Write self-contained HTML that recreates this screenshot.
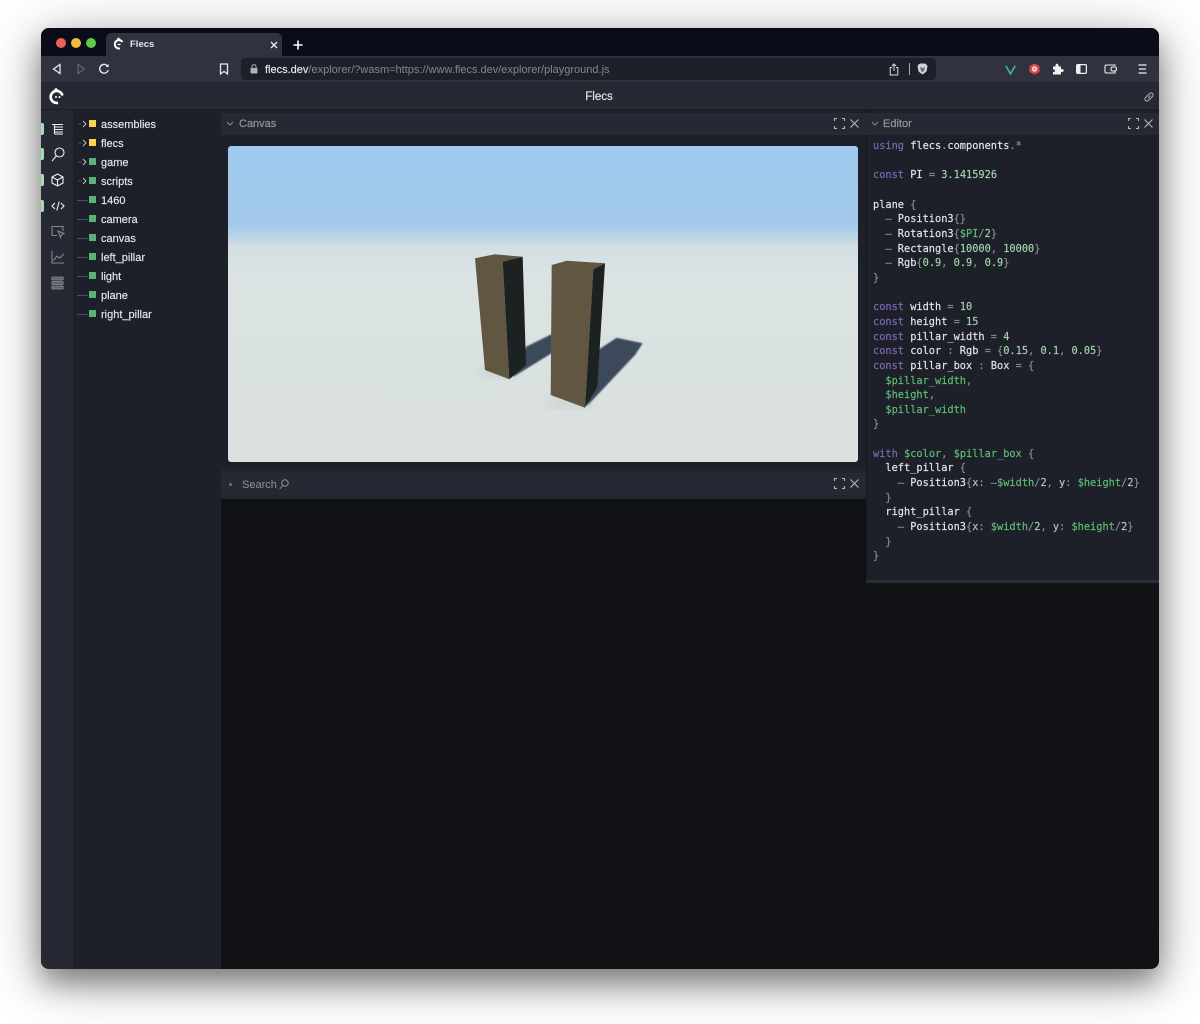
<!DOCTYPE html>
<html lang="en"><head><meta charset="utf-8"><title>Flecs</title>
<style>
*{box-sizing:border-box}
html,body{margin:0;padding:0;width:1200px;height:1024px;background:#fff;overflow:hidden}
body{font-family:"Liberation Sans",sans-serif;position:relative}
.a{position:absolute}
#win{position:absolute;left:41px;top:28px;width:1118px;height:941px;border-radius:8px;overflow:hidden;background:#111216;filter:blur(.3px)}
#shadow{position:absolute;left:41px;top:28px;width:1118px;height:941px;border-radius:8px;box-shadow:0 14px 28px rgba(0,0,0,.38),0 10px 60px rgba(0,0,0,.3)}
.t{position:absolute;white-space:pre;line-height:16px}
svg{position:absolute;overflow:visible}
.row{position:absolute;left:60px;font-size:11px;color:#e6e8ec;line-height:16px;white-space:pre;-webkit-text-stroke:.15px #e6e8ec}
.sq{position:absolute;left:48px;width:7px;height:7px}
.y{background:#f7d64a}.g{background:#5cb176}
.dash{position:absolute;left:36px;width:11px;height:1px;background:#4b4e58}
.mark{position:absolute;left:0;width:3px;height:12px;background:#a6dbb4;border-radius:0 2px 2px 0}
#code{position:absolute;left:832px;top:111px;font:10.3px/14.66px "DejaVu Sans Mono","Liberation Mono",monospace;color:#e6e8ec;white-space:pre;margin:0;-webkit-text-stroke:.15px}
.k{color:#7d6bb8}.n{color:#a4d6ad}.v{color:#5fbf78}.p{color:#8b8e96}
.h{font-size:11px;color:#8f9299;-webkit-text-stroke:.25px #8f9299}
</style></head>
<body>
<div id="shadow"></div>
<div id="win">
 <!-- tab strip -->
 <div class="a" style="left:0;top:0;width:1118px;height:28px;background:#0b0c1a"></div>
 <div class="a" style="left:15px;top:9.5px;width:10px;height:10px;border-radius:50%;background:#ee5f58"></div>
 <div class="a" style="left:30px;top:9.5px;width:10px;height:10px;border-radius:50%;background:#f5b93f"></div>
 <div class="a" style="left:45px;top:9.5px;width:10px;height:10px;border-radius:50%;background:#5fc94d"></div>
 <div class="a" style="left:65px;top:5px;width:176px;height:23px;background:#30333f;border-radius:5px 5px 0 0"></div>
 <svg style="left:72px;top:10px" width="12" height="12" viewBox="0 0 12 12" fill="none" stroke="#fff" stroke-width="2"><path d="M9.500 4A4.200 4.200 0 1 0 7 10.400"/><path d="M4.500 6.500h3" stroke-width="1.300"/><path d="M4.500 2.200 5.500 .8 7 2"/></svg>
 <div class="t" style="left:89px;top:9px;font-size:9.5px;font-weight:bold;color:#e4e6ea">Flecs</div>
 <svg style="left:229px;top:12.500px" width="8" height="8" viewBox="0 0 8 8" stroke="#eee" stroke-width="1.300"><path d="M1 1l6 6M7 1 1 7"/></svg>
 <svg style="left:252px;top:11.500px" width="10" height="10" viewBox="0 0 10 10" stroke="#fff" stroke-width="1.600"><path d="M5 .5v9M.5 5h9"/></svg>
 <!-- toolbar -->
 <div class="a" style="left:0;top:28px;width:1118px;height:26px;background:#30333f"></div>
 <svg style="left:11px;top:35px" width="10" height="12" viewBox="0 0 10 12" fill="none" stroke="#e8e8ea" stroke-width="1.300"><path d="M8 1.500v9L1.500 6z"/></svg>
 <svg style="left:35px;top:35px" width="10" height="12" viewBox="0 0 10 12" fill="none" stroke="#666a74" stroke-width="1.200"><path d="M2 1.500v9L8.500 6z"/></svg>
 <svg style="left:57px;top:35px" width="12" height="12" viewBox="0 0 12 12" fill="none" stroke="#e8e8ea" stroke-width="1.400"><path d="M10.300 7.200A4.400 4.400 0 1 1 9.200 2.600L10.400 3.800"/><path d="M10.600 1v3H7.600z" fill="#e8e8ea" stroke="none"/></svg>
 <svg style="left:178px;top:35px" width="10" height="12" viewBox="0 0 10 12" fill="none" stroke="#e8e8ea" stroke-width="1.300"><path d="M1.500 1h7v10L5 8.400 1.500 11z"/></svg>
 <div class="a" style="left:200px;top:30px;width:695px;height:22px;background:#1e2029;border-radius:4px"></div>
 <svg style="left:209px;top:36px" width="8" height="10" viewBox="0 0 8 10"><rect x=".5" y="4" width="7" height="5.500" rx="1" fill="#b0b2b8"/><path d="M2 4V2.600a2 2 0 0 1 4 0V4" fill="none" stroke="#b0b2b8" stroke-width="1"/></svg>
 <div class="t" style="left:224px;top:33.500px;font-size:11px;color:#e8e9ec;-webkit-text-stroke:.15px #e8e9ec">flecs.dev<span style="color:#85878e;-webkit-text-stroke:0">/explorer/?wasm=https://www.flecs.dev/explorer/playground.js</span></div>
 <svg style="left:848px;top:35px" width="10" height="13" viewBox="0 0 10 13" fill="none" stroke="#d8d9dc" stroke-width="1"><path d="M3 4.500H1.200v7.500h7.600V4.500H7M5 8V1M3 3 5 1l2 2"/></svg>
 <div class="a" style="left:868px;top:35px;width:1px;height:12px;background:#aaa"></div>
 <svg style="left:876px;top:35px" width="11" height="12" viewBox="0 0 11 12"><path d="M1.500 1.500 3.300.5h4.400l1.800 1 1 1.500-1 5.500L5.500 11.500 1.500 8.500.5 3z" fill="#d0d2d8"/><path d="M3 4l2.500 1L8 4 7 8 5.500 9 4 8z" fill="#6a6c76"/></svg>
 <svg style="left:964px;top:36.500px" width="11" height="10" viewBox="0 0 11 10" fill="none" stroke="#3fb587" stroke-width="1.700"><path d="M.8.800l4.700 8 4.700-8"/></svg>
 <svg style="left:988px;top:35px" width="11" height="12" viewBox="0 0 11 12"><path d="M5.500.5 10.500 3v6l-5 2.500L.5 9V3z" fill="#dd4a4a"/><circle cx="5.500" cy="6" r="2.600" fill="#f4e6e6"/><circle cx="5.500" cy="6" r="1" fill="#dd4a4a"/></svg>
 <svg style="left:1011px;top:35px" width="12" height="12" viewBox="0 0 12 12"><path d="M1 3.500h2.500C3.300 1.500 4 .8 5 .8s1.700.7 1.500 2.700H9V6c2-.2 2.700.5 2.700 1.500S11 9.200 9 9v2.500H1V9c1.500.2 2-.4 2-1.200S2.500 6.400 1 6.600z" fill="#f0f0f2"/></svg>
 <svg style="left:1035px;top:36px" width="11" height="10" viewBox="0 0 11 10"><rect x=".6" y=".6" width="9.800" height="8.800" rx="1" fill="none" stroke="#f0f0f2" stroke-width="1.200"/><rect x="1" y="1" width="3.500" height="8" fill="#f0f0f2"/></svg>
 <svg style="left:1063px;top:36px" width="13" height="10" viewBox="0 0 13 10" fill="none" stroke="#f0f0f2" stroke-width="1.100"><path d="M11 2V1H2.500C1.500 1 1 1.600 1 2.500V7.500C1 8.500 1.500 9 2.500 9H11V7.500"/><rect x="7" y="3" width="5.400" height="4" rx="1.500"/></svg>
 <svg style="left:1097px;top:36px" width="9" height="10" viewBox="0 0 9 10" stroke="#f0f0f2" stroke-width="1.300"><path d="M.5 1h8M1 5h7M.5 9h8"/></svg>
 <!-- app header -->
 <div class="a" style="left:0;top:54px;width:1118px;height:28px;background:#262933;border-bottom:1px solid #1b1d24"></div>
 <svg style="left:8px;top:59.500px" width="16" height="17" viewBox="0 0 16 17" fill="none" stroke="#fff" stroke-width="2.600"><path d="M13.500 7.500A6 6 0 1 0 9 14.800"/><path d="M5 3 7 1l2 2" stroke-width="1.800"/><circle cx="7" cy="9" r="1" fill="#fff" stroke="none"/><circle cx="10.500" cy="9" r="1" fill="#fff" stroke="none"/></svg>
 <div class="t" style="left:0;width:1116px;text-align:center;top:60.500px;font-size:11.500px;color:#e8e9ec;-webkit-text-stroke:.15px #e8e9ec">Flecs</div>
 <svg style="left:1102px;top:63px" width="12" height="12" viewBox="0 0 12 12" fill="none" stroke="#a8aab0" stroke-width="1.100"><path d="M5 7 7.500 4.500M4.500 4.700 6.500 2.600a2 2 0 0 1 3 2.900l-2 2M7.500 7.300 5.500 9.400a2 2 0 0 1-3-2.900l2-2"/></svg>
 <!-- icon rail -->
 <div class="a" style="left:0;top:82px;width:32px;height:859px;background:#262933"></div>
 <div class="a" style="left:32px;top:82px;width:148px;height:859px;background:#1d2028"></div>
 <div class="mark" style="top:95px"></div><div class="mark" style="top:120px"></div><div class="mark" style="top:146px"></div><div class="mark" style="top:172px"></div>
 <svg style="left:10px;top:95px" width="13" height="12" viewBox="0 0 13 12" fill="none" stroke="#eceef0" stroke-width="1.100"><path d="M1 1.500h11M3.500 4h8.500M3.500 6.500h8.500M3.500 9h8.500M3.500 11h8.500M3.500 1.500V11"/></svg>
 <svg style="left:10px;top:119px" width="14" height="15" viewBox="0 0 14 15" fill="none" stroke="#eceef0" stroke-width="1.100"><circle cx="8.500" cy="5.500" r="4.500"/><path d="M5.200 9 1 14"/></svg>
 <svg style="left:10px;top:145px" width="13" height="14" viewBox="0 0 13 14" fill="none" stroke="#eceef0" stroke-width="1.100"><path d="M6.500 1 12 4v6l-5.500 3L1 10V4zM1 4l5.500 3L12 4M6.500 7v6"/></svg>
 <svg style="left:10px;top:172px" width="14" height="12" viewBox="0 0 14 12" fill="none" stroke="#eceef0" stroke-width="1.100"><path d="M4 3 1 6l3 3M10 3l3 3-3 3M8.200 1.500 5.800 10.500"/></svg>
 <svg style="left:10px;top:197px" width="14" height="14" viewBox="0 0 14 14" fill="none" stroke="#83868e" stroke-width="1.100"><path d="M6 10.500H1V1.500h11V6"/><path d="M7 6l6 2.500-2.500 1-1 3z"/></svg>
 <svg style="left:10px;top:222px" width="14" height="14" viewBox="0 0 14 14" fill="none" stroke="#83868e" stroke-width="1.100"><path d="M1 1v12h12M2.500 10.500 6 6l2.500 2L13 4"/></svg>
 <svg style="left:10px;top:248px" width="13" height="14" viewBox="0 0 13 14" fill="#5f626b" stroke="#8a8d94" stroke-width=".8"><rect x=".8" y="1" width="11.400" height="3" rx=".8"/><rect x=".8" y="5.500" width="11.400" height="3" rx=".8"/><rect x=".8" y="10" width="11.400" height="3" rx=".8"/></svg>
 <!-- tree -->
 <svg style="left:36px;top:93px" width="11" height="60" viewBox="0 0 11 60" fill="none" stroke="#c8cad0" stroke-width=".9"><path d="M6 0l3 3-3 3M6 19l3 3-3 3M6 38l3 3-3 3M6 57l3 3-3 3"/><path d="M1 3H5M1 22H5M1 41H5M1 60H5" stroke="#4b4e58"/></svg>
 <div class="sq y" style="top:92px"></div><div class="row" style="top:88.500px">assemblies</div>
 <div class="sq y" style="top:111px"></div><div class="row" style="top:107.500px">flecs</div>
 <div class="sq g" style="top:130px"></div><div class="row" style="top:126.500px">game</div>
 <div class="sq g" style="top:149px"></div><div class="row" style="top:145.500px">scripts</div>
 <div class="dash" style="top:172px"></div><div class="sq g" style="top:168px"></div><div class="row" style="top:164.500px">1460</div>
 <div class="dash" style="top:191px"></div><div class="sq g" style="top:187px"></div><div class="row" style="top:183.500px">camera</div>
 <div class="dash" style="top:210px"></div><div class="sq g" style="top:206px"></div><div class="row" style="top:202.500px">canvas</div>
 <div class="dash" style="top:229px"></div><div class="sq g" style="top:225px"></div><div class="row" style="top:221.500px">left_pillar</div>
 <div class="dash" style="top:248px"></div><div class="sq g" style="top:244px"></div><div class="row" style="top:240.500px">light</div>
 <div class="dash" style="top:267px"></div><div class="sq g" style="top:263px"></div><div class="row" style="top:259.500px">plane</div>
 <div class="dash" style="top:286px"></div><div class="sq g" style="top:282px"></div><div class="row" style="top:278.500px">right_pillar</div>
 <!-- centre -->
 <div class="a" style="left:180px;top:82px;width:645px;height:859px;background:#111216"></div>
 <div class="a" style="left:180px;top:82px;width:645px;height:389px;background:#1d2028"></div>
 <div class="a" style="left:180px;top:85px;width:645px;height:22px;background:#262933"></div>
 <svg style="left:185px;top:93px" width="8" height="6" viewBox="0 0 8 6" fill="none" stroke="#85888f" stroke-width="1"><path d="M1 1l3 3 3-3"/></svg>
 <div class="t h" style="left:198px;top:88px">Canvas</div>
 <svg style="left:793px;top:90px" width="11" height="11" viewBox="0 0 11 11" fill="none" stroke="#b4b6bb" stroke-width="1.100"><path d="M.5 3V.5H3M8 .5h2.500V3M10.500 8v2.500H8M3 10.500H.5V8"/></svg>
 <svg style="left:809px;top:91px" width="9" height="9" viewBox="0 0 9 9" stroke="#b4b6bb" stroke-width="1.100"><path d="M.5.500l8 8M8.500.5l-8 8"/></svg>
 <!-- canvas -->
 <svg style="left:187px;top:118px;border-radius:3px" width="630" height="316" viewBox="228 146 630 316">
  <defs><linearGradient id="sky" x1="0" y1="0" x2="0" y2="1"><stop offset="0" stop-color="#a0c9ef"/><stop offset=".25" stop-color="#a3caec"/><stop offset=".285" stop-color="#b9d3e6"/><stop offset=".32" stop-color="#d4dfe4"/><stop offset=".4" stop-color="#dae2e3"/><stop offset="1" stop-color="#dae1de"/></linearGradient>
  <filter id="b"><feGaussianBlur stdDeviation=".9"/></filter><filter id="c"><feGaussianBlur stdDeviation="6"/></filter><filter id="d"><feGaussianBlur stdDeviation=".35"/></filter>
  <clipPath id="rr"><rect x="228" y="146" width="630" height="316" rx="3"/></clipPath></defs>
  <g clip-path="url(#rr)">
  <rect x="228" y="146" width="630" height="316" fill="url(#sky)"/>
  <ellipse cx="500" cy="372" rx="22" ry="7" fill="#aab4b5" filter="url(#c)" opacity=".3"/>
  <ellipse cx="570" cy="402" rx="24" ry="7" fill="#aab4b5" filter="url(#c)" opacity=".3"/>
  <path d="M526 346.700 552 334V353L513 377z" fill="#3b4a5a" filter="url(#b)"/>
  <path d="M598 350 616.700 337.700 642.700 343.300 635 355 587 406z" fill="#3b4a5a" filter="url(#b)"/>
  <g filter="url(#d)">
  <path d="M475 258.300 495 254.300 522.700 256.700 502.700 261.700 509.300 379.300 485 370z" fill="#615642"/>
  <path d="M502.700 261.700 522.700 256.700 526 365 509.300 379.300z" fill="#1c2021"/>
  <path d="M551.700 265 566.700 260.700 605 263.300 593.300 269.300 585 407.700 550.700 395z" fill="#615642"/>
  <path d="M593.300 269.300 605 263.300 597.300 386.700 585 407.700z" fill="#1c2021"/>
  </g></g>
 </svg>
 <!-- search header -->
 <div class="a" style="left:180px;top:441px;width:645px;height:30px;background:#22252e"></div>
 <div class="a" style="left:180px;top:445px;width:645px;height:22px;background:#262933"></div>
 <div class="a" style="left:188px;top:455px;width:3px;height:3px;border-radius:50%;background:#70737b"></div>
 <div class="t h" style="left:201px;top:448.500px;-webkit-text-stroke:0">Search</div>
 <svg style="left:238px;top:450.500px" width="10" height="11" viewBox="0 0 10 11" fill="none" stroke="#8f9299" stroke-width="1"><circle cx="6" cy="4" r="3.200"/><path d="M3.600 6.400.8 10"/></svg>
 <svg style="left:793px;top:450px" width="11" height="11" viewBox="0 0 11 11" fill="none" stroke="#b4b6bb" stroke-width="1.100"><path d="M.5 3V.5H3M8 .5h2.500V3M10.500 8v2.500H8M3 10.500H.5V8"/></svg>
 <svg style="left:809px;top:451px" width="9" height="9" viewBox="0 0 9 9" stroke="#b4b6bb" stroke-width="1.100"><path d="M.5.500l8 8M8.500.5l-8 8"/></svg>
 <!-- editor -->
 <div class="a" style="left:825px;top:82px;width:293px;height:473px;background:#1d2028;border-left:1px solid #15171c"></div>
 <div class="a" style="left:825px;top:85px;width:293px;height:22px;background:#262933"></div>
 <div class="a" style="left:825px;top:552px;width:293px;height:3px;background:#2a2d37"></div>
 <svg style="left:830px;top:93px" width="8" height="6" viewBox="0 0 8 6" fill="none" stroke="#85888f" stroke-width="1"><path d="M1 1l3 3 3-3"/></svg>
 <div class="t h" style="left:842px;top:88px">Editor</div>
 <svg style="left:1087px;top:90px" width="11" height="11" viewBox="0 0 11 11" fill="none" stroke="#b4b6bb" stroke-width="1.100"><path d="M.5 3V.5H3M8 .5h2.500V3M10.500 8v2.500H8M3 10.500H.5V8"/></svg>
 <svg style="left:1103px;top:91px" width="9" height="9" viewBox="0 0 9 9" stroke="#b4b6bb" stroke-width="1.100"><path d="M.5.500l8 8M8.500.5l-8 8"/></svg>
 <pre id="code"><span class="k">using</span> flecs<span class="p">.</span>components<span class="p">.*</span>

<span class="k">const</span> PI <span class="p">=</span> <span class="n">3.1415926</span>

plane <span class="p">{</span>
  <span class="p">–</span> Position3<span class="p">{}</span>
  <span class="p">–</span> Rotation3<span class="p">{</span><span class="v">$PI</span><span class="p">/</span><span class="n">2</span><span class="p">}</span>
  <span class="p">–</span> Rectangle<span class="p">{</span><span class="n">10000</span><span class="p">,</span> <span class="n">10000</span><span class="p">}</span>
  <span class="p">–</span> Rgb<span class="p">{</span><span class="n">0.9</span><span class="p">,</span> <span class="n">0.9</span><span class="p">,</span> <span class="n">0.9</span><span class="p">}</span>
<span class="p">}</span>

<span class="k">const</span> width <span class="p">=</span> <span class="n">10</span>
<span class="k">const</span> height <span class="p">=</span> <span class="n">15</span>
<span class="k">const</span> pillar_width <span class="p">=</span> <span class="n">4</span>
<span class="k">const</span> color <span class="p">:</span> Rgb <span class="p">=</span> <span class="p">{</span><span class="n">0.15</span><span class="p">,</span> <span class="n">0.1</span><span class="p">,</span> <span class="n">0.05</span><span class="p">}</span>
<span class="k">const</span> pillar_box <span class="p">:</span> Box <span class="p">=</span> <span class="p">{</span>
  <span class="v">$pillar_width</span><span class="p">,</span>
  <span class="v">$height</span><span class="p">,</span>
  <span class="v">$pillar_width</span>
<span class="p">}</span>

<span class="k">with</span> <span class="v">$color</span><span class="p">,</span> <span class="v">$pillar_box</span> <span class="p">{</span>
  left_pillar <span class="p">{</span>
    <span class="p">–</span> Position3<span class="p">{</span><span class="n">x</span><span class="p">:</span> <span class="p">–</span><span class="v">$width</span><span class="p">/</span><span class="n">2</span><span class="p">,</span> <span class="n">y</span><span class="p">:</span> <span class="v">$height</span><span class="p">/</span><span class="n">2</span><span class="p">}</span>
  <span class="p">}</span>
  right_pillar <span class="p">{</span>
    <span class="p">–</span> Position3<span class="p">{</span><span class="n">x</span><span class="p">:</span> <span class="v">$width</span><span class="p">/</span><span class="n">2</span><span class="p">,</span> <span class="n">y</span><span class="p">:</span> <span class="v">$height</span><span class="p">/</span><span class="n">2</span><span class="p">}</span>
  <span class="p">}</span>
<span class="p">}</span></pre>
</div>
</body></html>
